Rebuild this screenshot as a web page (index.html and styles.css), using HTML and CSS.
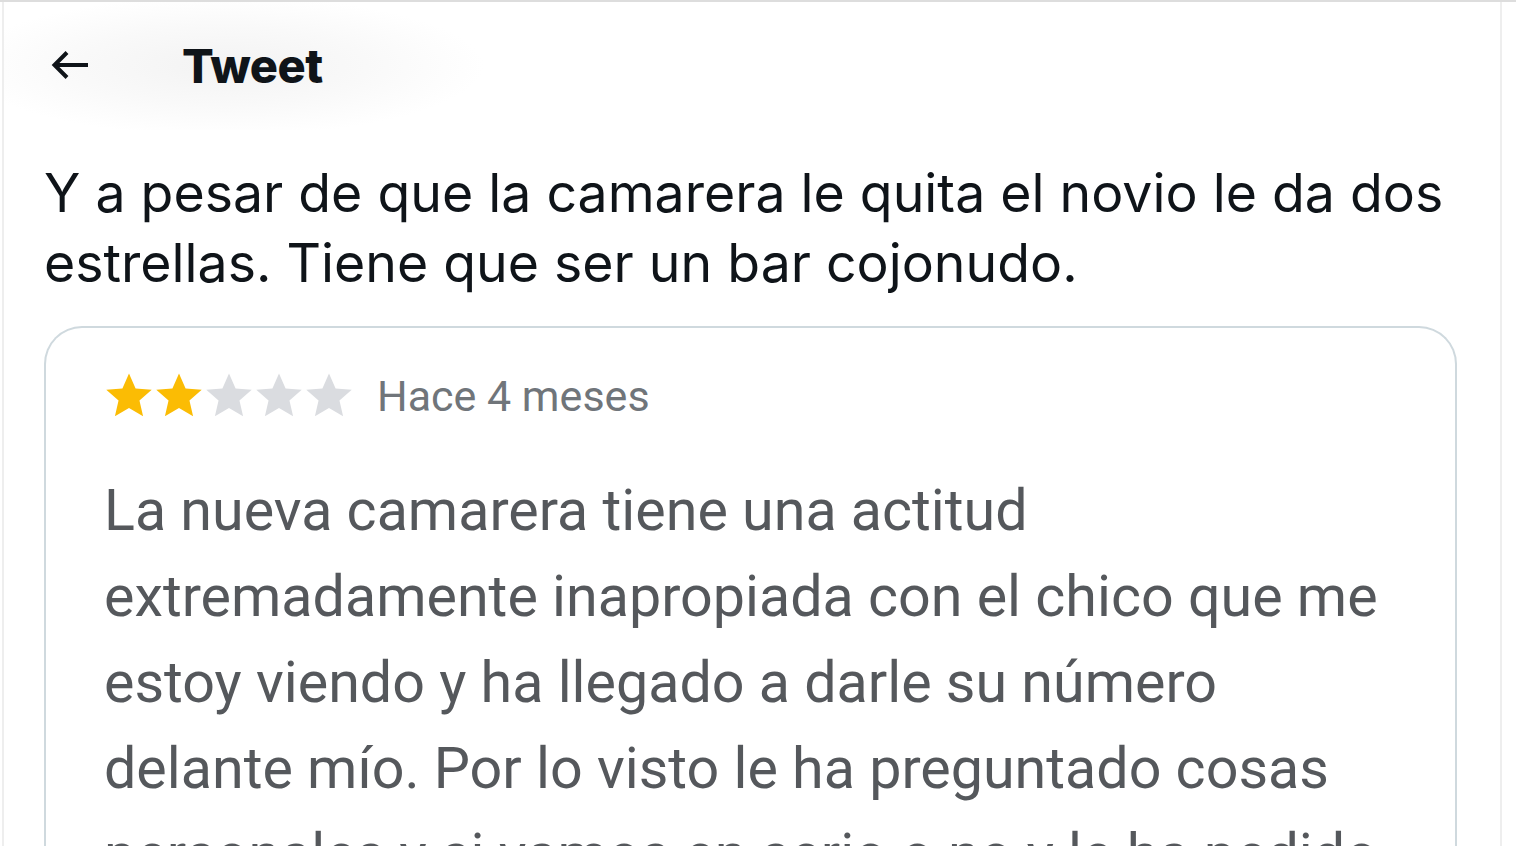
FILE: index.html
```html
<!DOCTYPE html>
<html lang="es">
<head>
<meta charset="utf-8">
<title>Tweet</title>
<link rel="stylesheet" href="styles.css">
</head>
<body>
<div class="page">
  <main class="column">
    <header class="topbar">
      <div class="back">
        <svg width="40" height="32" viewBox="0 0 40 32" aria-hidden="true">
          <path d="M37 16H4M16 3.5L3.5 16L16 28.5" fill="none" stroke="#0f1419" stroke-width="4" stroke-linejoin="miter"/>
        </svg>
      </div>
      <h1 class="title">Tweet</h1>
    </header>
    <p class="tweet-text">Y a pesar de que la camarera le quita el novio le da dos estrellas. Tiene que ser un bar cojonudo.</p>
    <section class="card">
      <div class="meta">
        <div class="stars">
          <svg class="star on" viewBox="1 1 22 22"><path d="M12 2.5l2.9 6.6 7.1.6-5.4 4.7 1.6 7-6.2-3.7-6.2 3.7 1.6-7L2 9.7l7.1-.6z"/></svg>
          <svg class="star on" viewBox="1 1 22 22"><path d="M12 2.5l2.9 6.6 7.1.6-5.4 4.7 1.6 7-6.2-3.7-6.2 3.7 1.6-7L2 9.7l7.1-.6z"/></svg>
          <svg class="star" viewBox="1 1 22 22"><path d="M12 2.5l2.9 6.6 7.1.6-5.4 4.7 1.6 7-6.2-3.7-6.2 3.7 1.6-7L2 9.7l7.1-.6z"/></svg>
          <svg class="star" viewBox="1 1 22 22"><path d="M12 2.5l2.9 6.6 7.1.6-5.4 4.7 1.6 7-6.2-3.7-6.2 3.7 1.6-7L2 9.7l7.1-.6z"/></svg>
          <svg class="star" viewBox="1 1 22 22"><path d="M12 2.5l2.9 6.6 7.1.6-5.4 4.7 1.6 7-6.2-3.7-6.2 3.7 1.6-7L2 9.7l7.1-.6z"/></svg>
        </div>
        <span class="date">Hace 4 meses</span>
      </div>
      <p class="review">La nueva camarera tiene una actitud<br>extremadamente inapropiada con el chico que me<br>estoy viendo y ha llegado a darle su número<br>delante mío. Por lo visto le ha preguntado cosas<br>personales y si vamos en serio o no y le ha pedido</p>
    </section>
  </main>
</div>
</body>
</html>
```

FILE: styles.css
```css
html, body {
  margin: 0;
  padding: 0;
  background: #ffffff;
}
body {
  height: 846px;
  overflow: hidden;
}
.page {
  border-top: 2px solid #dddddd;
  height: 844px;
  overflow: hidden;
}
.column {
  margin-left: 2px;
  width: 1496px;
  height: 100%;
  border-left: 2px solid #eeeeee;
  border-right: 2px solid #eeeeee;
  overflow: hidden;
}
.topbar {
  height: 130px;
  display: flex;
  align-items: center;
  padding-left: 47px;
  margin-top: -2px;
  background: radial-gradient(ellipse 260px 70px at 220px 66px, #f3f3f3 0%, #f9f9f9 55%, #ffffff 100%);
}
.back {
  width: 40px;
  height: 32px;
  display: flex;
}
.title {
  margin: 0 0 0 91px;
  font-family: Inter, "Liberation Sans", sans-serif;
  font-weight: 800;
  font-size: 47px;
  letter-spacing: -0.5px;
  color: #0f1419;
}
.tweet-text {
  margin: 28px 0 0 40px;
  width: 1440px;
  font-family: Inter, "Liberation Sans", sans-serif;
  font-size: 53.6px;
  line-height: 70px;
  color: #0f1419;
}
.card {
  box-sizing: border-box;
  margin: 28px 0 0 40px;
  width: 1413px;
  height: 600px;
  border: 2px solid #cfd9de;
  border-bottom: none;
  border-radius: 38px 38px 0 0;
  padding: 40px 0 0 58px;
}
.meta {
  display: flex;
  align-items: center;
  gap: 23px;
}
.stars {
  display: flex;
}
.star {
  width: 50px;
  height: 50px;
  fill: #dadce0;
}
.star.on {
  fill: #fbbc04;
}
.date {
  font-family: Roboto, "Liberation Sans", sans-serif;
  font-size: 43px;
  color: #70757a;
  padding-top: 3px;
}
.review {
  margin: 47px 0 0 0;
  font-family: Roboto, "Liberation Sans", sans-serif;
  font-size: 57.4px;
  line-height: 86px;
  color: #55585c;
}
```
